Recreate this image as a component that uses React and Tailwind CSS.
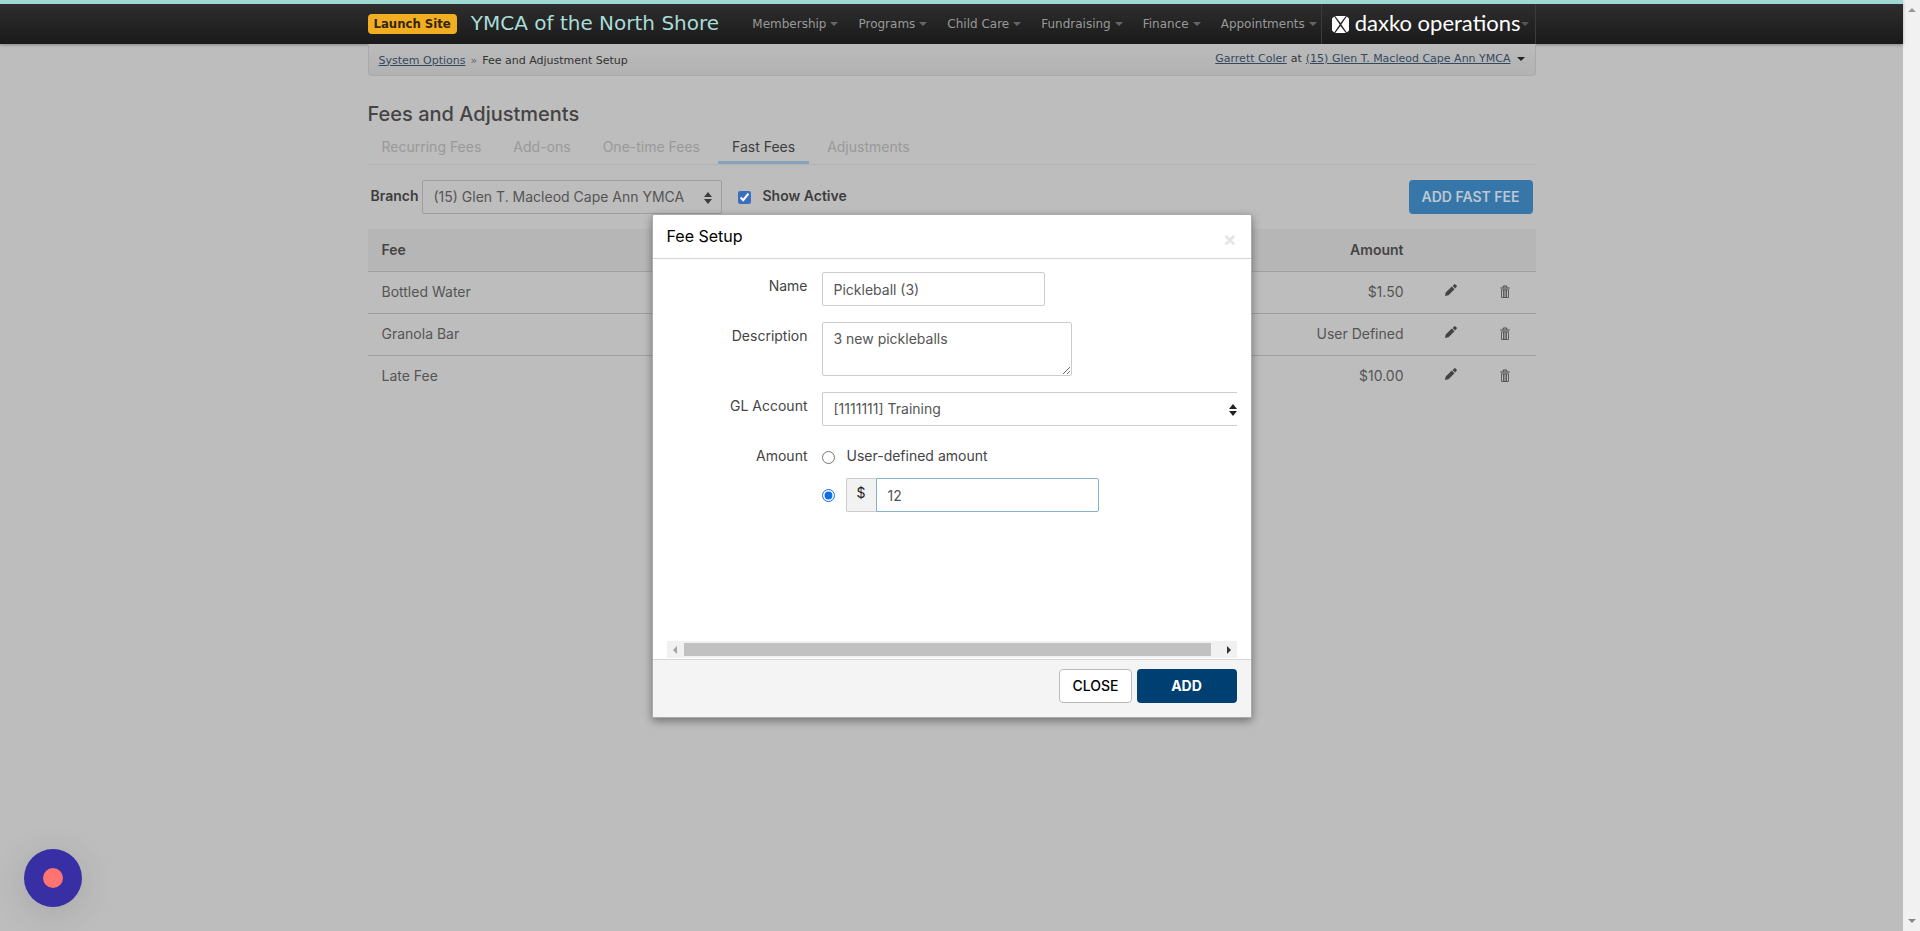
import React from "react";

const menus = ["Membership", "Programs", "Child Care", "Fundraising", "Finance", "Appointments"];
const tabs = ["Recurring Fees", "Add-ons", "One-time Fees", "Fast Fees", "Adjustments"];
const fees = [
  { name: "Bottled Water", amount: "$1.50" },
  { name: "Granola Bar", amount: "User Defined" },
  { name: "Late Fee", amount: "$10.00" },
];

function Caret({ className }) {
  return (
    <svg viewBox="0 0 8 4" className={`h-1 w-2 shrink-0 fill-current ${className}`} aria-hidden="true">
      <path d="M0 0h8L4 4z" />
    </svg>
  );
}

function Sorter({ className }) {
  return (
    <svg viewBox="0 0 8 12" className={`pointer-events-none h-3 w-2 fill-current ${className}`} aria-hidden="true">
      <path d="M4 0l4 5H0zM4 12l4-5H0z" />
    </svg>
  );
}

function Pencil() {
  return (
    <svg viewBox="0 0 12 12" className="h-3 w-3 fill-current" aria-hidden="true">
      <path d="M0 12l.7-3.500L6.800 2.600l2.700 2.700L3.500 11.200zM7.600 1.900L9.200.4a1 1 0 0 1 1.300 0l1.100 1.100a1 1 0 0 1 0 1.300L10.200 4.500z" />
    </svg>
  );
}

function Trash() {
  return (
    <svg viewBox="0 0 10 13" className="h-[13px] w-[10px]" fill="none" stroke="currentColor" aria-hidden="true">
      <path d="M3.300 2.500V1h3.400v1.500M.3 3h9.400" />
      <path d="M1.500 4.800h7v7.700h-7zM3.500 5v7.500M5 5v7.500M6.500 5v7.500" strokeWidth=".8" />
    </svg>
  );
}

function Logo() {
  return (
    <svg viewBox="0 0 17 17" className="h-[17px] w-[17px] shrink-0" aria-hidden="true">
      <path
        fill="#fff"
        d="M3.200 0h10.600L8.500 7zM3.200 17h10.600L8.500 10zM2.200.6L7.700 8.500 2.200 16.400 0 14.500v-12zM14.800.6L9.300 8.500l5.500 7.900 2.200-1.900v-12z"
      />
    </svg>
  );
}

function Header() {
  return (
    <header className="border-t-4 border-[#a0d8d4] bg-linear-to-b from-[#2e2e2e] to-[#1a1a1a] font-['DejaVu_Sans',Verdana,sans-serif] shadow-[0_1px_3px_rgba(0,0,0,0.3)]">
      <div className="mx-auto flex h-10 max-w-[1168px] items-center whitespace-nowrap">
        <a href="#launch" className="rounded bg-[#f2ae22] px-1.5 text-[13px] leading-5 font-bold text-[#33260a] font-['DejaVu_Sans_Condensed','DejaVu_Sans',sans-serif]">
          Launch Site
        </a>
        <a href="#home" className="ml-3.5 pb-0.5 text-xl leading-6 text-[#a9dcd8]">YMCA of the North Shore</a>
        <nav className="ml-auto flex h-full items-center gap-5 pr-1 text-xs text-[#999]">
          {menus.map((m) => (
            <a key={m} href="#menu" className="flex items-center gap-1">
              {m}
              <Caret className="text-[#666]" />
            </a>
          ))}
        </nav>
        <a href="#operations" className="flex h-full items-center border-x border-[#3c3c3c] pr-1.5 pl-2.5 text-white">
          <Logo />
          <span className="ml-1.5 pb-0.5 font-[Lato,sans-serif] text-[22px] leading-6">daxko operations</span>
          <Caret className="text-[#555]" />
        </a>
      </div>
    </header>
  );
}

function Breadcrumbs() {
  return (
    <div className="flex h-8 items-center justify-between rounded-b border border-t-0 border-[#a9a9a9] bg-linear-to-b from-[#bbb] to-[#b2b2b2] px-2.5 font-['DejaVu_Sans',Verdana,sans-serif] text-[11px] leading-4 text-[#333]">
      <p className="pt-0.5">
        <a href="#options" className="text-[#34495e] underline">System Options</a>
        <span className="px-[5px] text-[#666]">»</span>
        Fee and Adjustment Setup
      </p>
      <p className="flex items-center pb-0.5">
        <a href="#user" className="text-[#34495e] underline">Garrett Coler</a>
        <span className="px-1">at</span>
        <a href="#branch" className="text-[#34495e] underline">(15) Glen T. Macleod Cape Ann YMCA</a>
        <Caret className="ml-1.5 text-[#222]" />
      </p>
    </div>
  );
}

function FeePage() {
  return (
    <main className="mx-auto max-w-[1168px]">
      <Breadcrumbs />
      <h1 className="mt-6 text-xl leading-7 font-medium text-[#444]">Fees and Adjustments</h1>
      <nav className="mt-[3px] flex gap-1 border-b border-[#b2b2b2]">
        {tabs.map((t) => (
          <a
            key={t}
            href="#tab"
            className={
              t === "Fast Fees"
                ? "border-b-[3px] border-[#87a3bb] px-3.5 pt-1.5 pb-1 leading-5 text-[#3d3d3d]"
                : "border-b-[3px] border-transparent px-3.5 pt-1.5 pb-1 leading-5 text-[#999]"
            }
          >
            {t}
          </a>
        ))}
      </nav>
      <div className="mt-[15px] flex items-center px-[3px] text-[#3d3d3d]">
        <label htmlFor="branch" className="pb-0.5 font-semibold">Branch</label>
        <div className="relative ml-[3px] w-[300px]">
          <select id="branch" className="h-[34px] w-full appearance-none rounded-xs border border-[#9f9f9f] bg-transparent px-[11px] text-[#555]">
            <option>(15) Glen T. Macleod Cape Ann YMCA</option>
          </select>
          <Sorter className="absolute top-3 right-2.5 text-[#3d3d3d]" />
        </div>
        <input id="active" type="checkbox" defaultChecked className="ml-4 h-[13px] w-[13px] accent-[#3a6fc0]" />
        <label htmlFor="active" className="ml-3 pb-0.5 font-semibold">Show Active</label>
        <button type="button" className="ml-auto h-[34px] rounded bg-[#3776a9] px-[13px] font-semibold text-[#bcc7d2]">
          ADD FAST FEE
        </button>
      </div>
      <table className="mt-[15px] w-full border-collapse text-[#555]">
        <thead>
          <tr className="h-[42px] border-b border-[#a0a0a0] bg-[#b6b6b6] text-[#444]">
            <th className="px-3.5 text-left font-semibold">Fee</th>
            <th className="px-3.5 text-right font-semibold">Amount</th>
            <th className="w-[66px]" aria-label="Edit" />
            <th className="w-[52px]" aria-label="Delete" />
          </tr>
        </thead>
        <tbody>
          {fees.map((f) => (
            <tr key={f.name} className="h-[42px] border-b border-[#a0a0a0] last:border-b-0">
              <td className="px-3.5">{f.name}</td>
              <td className="px-3.5 text-right">{f.amount}</td>
              <td className="text-center leading-none">
                <button type="button" aria-label={`Edit ${f.name}`} className="pb-1 text-[#444]"><Pencil /></button>
              </td>
              <td className="pl-4 text-left leading-none">
                <button type="button" aria-label={`Delete ${f.name}`} className="text-[#444]"><Trash /></button>
              </td>
            </tr>
          ))}
        </tbody>
      </table>
    </main>
  );
}

function Field({ label, id, children }) {
  return (
    <div className="mb-4 flex">
      <label htmlFor={id} className="w-[141px] shrink-0 pt-1 text-right leading-5 text-[#444]">{label}</label>
      <div className="ml-3.5 min-w-0 flex-1">{children}</div>
    </div>
  );
}

function ScrollTrack() {
  return (
    <div className="flex h-[17px] items-center justify-between bg-[#f1f1f1] px-1.5" aria-hidden="true">
      <svg viewBox="0 0 4 8" className="h-2 w-1 fill-[#a3a3a3]"><path d="M4 0v8L0 4z" /></svg>
      <div className="mr-4 ml-[7px] h-[13px] flex-1 bg-[#c1c1c1]" />
      <svg viewBox="0 0 4 8" className="h-2 w-1 fill-[#333]"><path d="M0 0v8l4-4z" /></svg>
    </div>
  );
}

function FeeDialog() {
  const box = "block rounded-xs border border-[#ccc] bg-white px-[11px] text-[#555] outline-none";
  return (
    <section
      role="dialog"
      aria-labelledby="fee-title"
      className="absolute top-[214px] left-1/2 w-[600px] -translate-x-1/2 overflow-hidden rounded-xs border border-[#aaa] bg-white shadow-[0_3px_9px_rgba(0,0,0,0.4)]"
    >
      <header className="flex h-11 items-center justify-between border-b border-[#d5d5d5] px-3.5">
        <h2 id="fee-title" className="pb-0.5 text-base text-black">Fee Setup</h2>
        <button type="button" aria-label="Dismiss" className="pt-1 text-xl leading-5 font-bold text-[#e5e5e5]">×</button>
      </header>
      <div className="px-3.5 pt-[13px]">
        <form className="h-[369px] overflow-hidden">
          <Field label="Name" id="name">
            <input id="name" type="text" defaultValue="Pickleball (3)" className={`${box} h-[34px] w-[223px]`} />
          </Field>
          <Field label="Description" id="description">
            <textarea id="description" defaultValue="3 new pickleballs" className={`${box} h-[54px] w-[250px] py-1.5 leading-5`} />
          </Field>
          <Field label="GL Account" id="account">
            <div className="relative">
              <select id="account" className={`${box} h-[34px] w-full appearance-none rounded-r-none border-r-0 text-[#444]`}>
                <option>[1111111] Training</option>
              </select>
              <Sorter className="absolute top-3 right-0 text-[#222]" />
            </div>
          </Field>
          <Field label="Amount" id="amount">
            <div className="flex items-center pt-1 leading-5 text-[#444]">
              <input id="user-defined" type="radio" name="kind" className="h-[13px] w-[13px]" />
              <label htmlFor="user-defined" className="ml-3 pb-0.5">User-defined amount</label>
            </div>
            <div className="mt-2.5 flex items-center">
              <input type="radio" name="kind" defaultChecked aria-label="Fixed amount" className="h-[13px] w-[13px] accent-[#0f6fe8]" />
              <label htmlFor="amount" className="ml-[11px] h-[34px] w-[30px] rounded-l-xs border border-r-0 border-[#ccc] bg-[#f2f2f2] pt-1 text-center leading-5 text-[#222]">
                $
              </label>
              <input id="amount" type="text" defaultValue="12" className="h-[34px] w-[223px] rounded-r-xs border border-[#87b0cc] px-[11px] text-[#555] outline-none" />
            </div>
          </Field>
        </form>
        <ScrollTrack />
      </div>
      <footer className="mt-px flex h-[58px] justify-end gap-[5px] border-t border-[#d5d5d5] bg-[#f4f4f4] px-3.5 pt-[9px]">
        <button type="button" className="h-[34px] rounded-sm border border-[#bbb] bg-white px-3 font-medium text-black">CLOSE</button>
        <button type="button" className="h-[34px] w-[100px] rounded-sm bg-[#003f72] font-bold text-white">ADD</button>
      </footer>
    </section>
  );
}

export default function App() {
  return (
    <div className="flex min-h-screen bg-[#bdbdbd] font-[Inter,sans-serif] text-sm">
      <div className="relative min-w-0 flex-1">
        <Header />
        <FeePage />
        <FeeDialog />
        <button
          type="button"
          aria-label="Record"
          className="absolute bottom-6 left-6 flex h-[58px] w-[58px] items-center justify-center rounded-full bg-[#382fa5] shadow-[0_6px_36px_rgba(0,0,0,0.12)]"
        >
          <span className="h-5 w-5 rounded-full bg-[#ff7370]" />
        </button>
      </div>
      <div className="flex w-[17px] shrink-0 flex-col items-center justify-between bg-[#f1f1f1] py-2" aria-hidden="true">
        <svg viewBox="0 0 8 4" className="h-1 w-2 fill-[#999]"><path d="M0 4h8L4 0z" /></svg>
        <svg viewBox="0 0 8 4" className="h-1 w-2 fill-[#888]"><path d="M0 0h8L4 4z" /></svg>
      </div>
    </div>
  );
}
